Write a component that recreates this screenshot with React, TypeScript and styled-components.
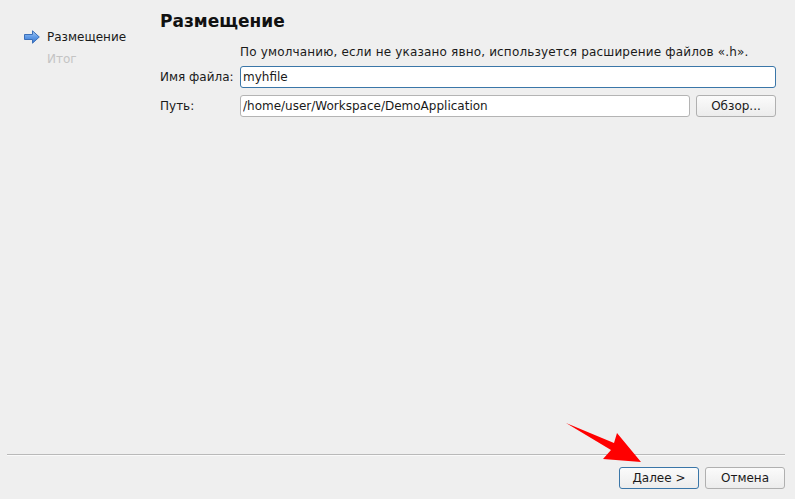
import styled, { createGlobalStyle } from 'styled-components';

const GlobalStyle = createGlobalStyle`
  html, body {
    margin: 0;
    padding: 0;
    background: #efefef;
  }
  body {
    font-family: "DejaVu Sans", "Liberation Sans", sans-serif;
    font-size: 12px;
    color: #1a1a1a;
  }
`;

const Window = styled.div({
  position: 'relative',
  width: '795px',
  height: '499px',
  display: 'flex',
  flexDirection: 'column',
  background: '#efefef',
  overflow: 'hidden'
});

const Body = styled.div({
  flex: 1,
  display: 'flex'
});

const Sidebar = styled.div({
  width: '160px',
  paddingTop: '29px',
  paddingLeft: '24px',
  boxSizing: 'border-box',
  display: 'flex',
  flexDirection: 'column',
  gap: '7px'
});

const StepItem = styled.div<{ $active?: boolean }>(({ $active }) => ({
  display: 'flex',
  alignItems: 'center',
  height: '15px',
  gap: '7px',
  paddingLeft: $active ? 0 : '23px',
  color: $active ? '#1a1a1a' : '#c4c4c4'
}));

const Content = styled.div({
  flex: 1,
  paddingTop: '10px',
  paddingRight: '19px'
});

const Title = styled.h1({
  margin: 0,
  fontFamily: '"DejaVu Sans", sans-serif',
  fontSize: '17px',
  fontWeight: 'bold',
  lineHeight: '22px',
  color: '#111'
});

const Form = styled.div({
  marginTop: '13px',
  display: 'grid',
  gridTemplateColumns: '80px 1fr auto',
  columnGap: '6px',
  rowGap: '7px',
  alignItems: 'center'
});

const Hint = styled.div({
  gridColumn: '2 / 4',
  marginLeft: '-6px',
  lineHeight: '14px',
  letterSpacing: '0.17px'
});

const Label = styled.label({
  whiteSpace: 'nowrap'
});

const Field = styled.input<{ $focused?: boolean; $span?: boolean }>(({ $focused, $span }) => ({
  gridColumn: $span ? '2 / 4' : 'auto',
  marginLeft: '-6px',
  height: '22px',
  boxSizing: 'border-box',
  padding: '0 2px',
  border: `1px solid ${$focused ? '#3a76a8' : '#b4b4b4'}`,
  borderRadius: '3px',
  background: '#fff',
  fontFamily: '"DejaVu Sans", sans-serif',
  fontSize: '12px',
  color: '#1a1a1a',
  outline: 'none'
}));

const Button = styled.button<{ $default?: boolean }>(({ $default }) => ({
  width: '80px',
  height: '22px',
  boxSizing: 'border-box',
  border: `1px solid ${$default ? '#3a76a8' : '#b0b0b0'}`,
  borderRadius: '3px',
  background: 'linear-gradient(#fbfbfb, #ececec)',
  fontFamily: '"DejaVu Sans", sans-serif',
  fontSize: '12px',
  color: '#1a1a1a',
  padding: 0
}));

const Footer = styled.div({
  padding: '0 10px 10px 7px'
});

const Separator = styled.div({
  height: '1px',
  background: '#b9b9b9',
  borderBottom: '1px solid #fafafa'
});

const ButtonRow = styled.div({
  marginTop: '11px',
  display: 'flex',
  justifyContent: 'flex-end',
  gap: '6px'
});

const Annotation = styled.svg({
  position: 'absolute',
  left: 0,
  top: 0,
  pointerEvents: 'none'
});

function StepArrow() {
  return (
    <svg width="16" height="14" viewBox="0 0 16 14">
      <defs>
        <linearGradient id="sa" x1="0" y1="0" x2="0" y2="1">
          <stop offset="0" stopColor="#a9cdf5" />
          <stop offset="0.5" stopColor="#5f9ae6" />
          <stop offset="1" stopColor="#3a78d2" />
        </linearGradient>
      </defs>
      <path
        d="M0.5 4.5 H8.5 V0.8 L15.3 7 L8.5 13.2 V9.5 H0.5 Z"
        fill="url(#sa)"
        stroke="#3b6fb8"
        strokeWidth="1"
        strokeLinejoin="round"
      />
    </svg>
  );
}

export default function App() {
  return (
    <>
      <GlobalStyle />
      <Window>
        <Body>
          <Sidebar>
            <StepItem $active>
              <StepArrow />
              <span>Размещение</span>
            </StepItem>
            <StepItem>Итог</StepItem>
          </Sidebar>
          <Content>
            <Title>Размещение</Title>
            <Form>
              <span />
              <Hint>По умолчанию, если не указано явно, используется расширение файлов «.h».</Hint>
              <Label>Имя файла:</Label>
              <Field $focused $span defaultValue="myhfile" />
              <Label>Путь:</Label>
              <Field defaultValue="/home/user/Workspace/DemoApplication" />
              <Button>Обзор...</Button>
            </Form>
          </Content>
        </Body>
        <Footer>
          <Separator />
          <ButtonRow>
            <Button $default>
              <u>Д</u>алее &gt;
            </Button>
            <Button>Отмена</Button>
          </ButtonRow>
        </Footer>
        <Annotation width="795" height="499" viewBox="0 0 795 499">
          <polygon
            points="566,423 614,443 617,433 641,462 603,459 611,450"
            fill="#ff0000"
          />
        </Annotation>
      </Window>
    </>
  );
}
